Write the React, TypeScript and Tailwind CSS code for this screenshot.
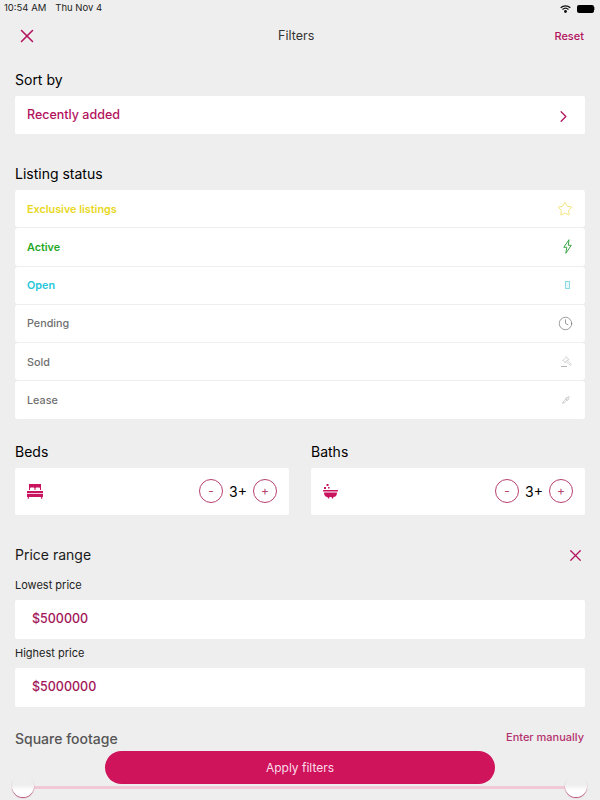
import { ChevronRight, Clock, Gavel, Pipette, Star, X } from 'lucide-react';

const ZapIcon = () => (
  <svg width="9" height="15" viewBox="0 0 9 15" fill="none" stroke="#3aa548" strokeWidth="1" strokeLinejoin="round">
    <path d="M6 .7 .8 8.300h3L2.800 14.300 8.300 6.300h-3z" />
  </svg>
);

const statuses = [
  { label: 'Exclusive listings', text: 'text-[#e8d71e] font-semibold', icon: <Star size={16} strokeWidth={1.2} className="text-[#ecdc5a]" /> },
  { label: 'Active', text: 'text-[#1fa81f] font-semibold', icon: <span className="mr-[1px]"><ZapIcon /></span> },
  {
    label: 'Open',
    text: 'text-[#25c6d9] font-semibold',
    icon: <span className="block w-[5px] h-[8px] mr-[3px] border border-[#8adbe6] bg-[#e8f8fa]" />,
  },
  { label: 'Pending', text: 'text-[#6f6f6f] font-medium', icon: <Clock size={15} strokeWidth={1} className="text-[#666666]" /> },
  {
    label: 'Sold',
    text: 'text-[#6f6f6f] font-medium',
    icon: (
      <span className="flex flex-col items-start mr-[1px]">
        <Gavel size={10} strokeWidth={1.2} className="text-[#a8a8a8] -scale-x-100 ml-[1px]" />
        <span className="block w-[6px] h-[1px] bg-[#b5b5b5]" />
      </span>
    ),
  },
  { label: 'Lease', text: 'text-[#6f6f6f] font-medium', icon: <Pipette size={8} strokeWidth={1.200} className="text-[#8a8a8a] mr-[3px]" /> },
];

const BedIcon = () => (
  <svg width="16" height="15" viewBox="0 0 16 15" fill="#c8135f">
    <path d="M2 0h12v6h-1V4.500a1 1 0 0 0-1-1H9.500a1 1 0 0 0-1 1V6h-1V4.500a1 1 0 0 0-1-1H4a1 1 0 0 0-1 1V6H2z" />
    <path d="M0 7h16v6h-.8v2h-.8l-.4-2H2l-.4 2H.8v-2H0z" />
    <rect x="0" y="9" width="16" height="1" fill="#f7c6d9" />
  </svg>
);

const BathIcon = () => (
  <svg width="15" height="15" viewBox="0 0 15 15" fill="#c8135f">
    <rect x="3.500" y="0" width="2" height="2" />
    <rect x="1" y="3" width="2" height="2" />
    <rect x="5" y="3" width="1.500" height="1.500" />
    <rect x="0" y="6" width="15" height="1.500" rx="0.500" />
    <path d="M1 8.500h13c0 3-1.500 4.500-3.500 4.500l-.5 1.500H9L8.500 13h-2L6 14.500H5L4.500 13C2.500 13 1 11.500 1 8.500z" />
  </svg>
);

const Stepper = () => (
  <div className="flex items-center">
    <span className="flex items-center justify-center w-[24px] h-[24px] rounded-full border border-[#b5416f] text-[12px] text-[#b5416f]">-</span>
    <span className="w-[30px] text-center text-[14px] text-black">3+</span>
    <span className="flex items-center justify-center w-[24px] h-[24px] rounded-full border border-[#b5416f] text-[12px] text-[#b5416f]">+</span>
  </div>
);

const SliderThumb = () => (
  <span className="block w-[22px] h-[22px] rounded-full bg-[linear-gradient(to_bottom,#eeeeee_45%,#ffffff_70%)] shadow-[0_1px_1px_#b5416f]" />
);

export default function App() {
  return (
    <div className="relative w-[600px] h-[800px] overflow-hidden bg-[#eeeeee] font-['Inter',sans-serif] text-[#1a1a1a]">
      {/* Status bar */}
      <div className="flex items-center justify-between h-[16px] pt-[1px] pl-[4px] pr-[5px] text-[9.500px] text-[#222222]">
        <div className="flex gap-[9px]">
          <span>10:54 AM</span>
          <span>Thu Nov 4</span>
        </div>
        <div className="flex items-center gap-[6px]">
          <svg width="11" height="8" viewBox="0 0 11 8" fill="none" stroke="#111111" strokeWidth="1.300">
            <path d="M.7 2.700a7 7 0 0 1 9.600 0M2.500 4.500a4.500 4.500 0 0 1 6 0" />
            <circle cx="5.500" cy="6.500" r=".8" fill="#111111" />
          </svg>
          <span className="flex items-center">
            <span className="block w-[17px] h-[8px] rounded-[2px] bg-black" />
            <span className="block w-[1px] h-[3px] bg-[#999999]" />
          </span>
        </div>
      </div>

      {/* Header */}
      <div className="flex items-center justify-between h-[40px] pl-[16px] pr-[16px]">
        <X size={22} strokeWidth={1.700} className="text-[#b3125d]" />
        <span className="text-[12.500px] text-[#333333]">Filters</span>
        <span className="text-[11px] font-medium text-[#b3125d]">Reset</span>
      </div>

      <div className="px-[15px] pt-[14px]">
        {/* Sort by */}
        <h2 className="h-[20px] text-[14px] leading-[20px] text-black">Sort by</h2>
        <div className="flex items-center justify-between h-[38px] mt-[6px] pl-[12px] pr-[12px] rounded-[2px] bg-white">
          <span className="text-[12.500px] font-medium text-[#b3125d]">Recently added</span>
          <ChevronRight size={19} strokeWidth={1.600} className="text-[#b3125d] mt-[3px]" />
        </div>

        {/* Listing status */}
        <h2 className="h-[20px] mt-[30px] text-[14px] leading-[20px] text-black">Listing status</h2>
        <div className="flex flex-col gap-[1px] mt-[6px]">
          {statuses.map((s) => (
            <div key={s.label} className="flex items-center justify-between h-[37.300px] pl-[12px] pr-[12px] rounded-[3px] bg-white">
              <span className={`pt-[2px] text-[10.800px] ${s.text}`}>{s.label}</span>
              {s.icon}
            </div>
          ))}
        </div>

        {/* Beds and baths */}
        <div className="grid grid-cols-2 gap-[22px] mt-[23px]">
          <div>
            <h2 className="h-[20px] text-[14px] leading-[20px] text-black">Beds</h2>
            <div className="flex items-center justify-between h-[47px] mt-[6px] pl-[12px] pr-[12px] rounded-[2px] bg-white">
              <BedIcon />
              <Stepper />
            </div>
          </div>
          <div>
            <h2 className="h-[20px] text-[14px] leading-[20px] text-black">Baths</h2>
            <div className="flex items-center justify-between h-[47px] mt-[6px] pl-[12px] pr-[12px] rounded-[2px] bg-white">
              <BathIcon />
              <Stepper />
            </div>
          </div>
        </div>

        {/* Price range */}
        <div className="flex items-center justify-between h-[20px] mt-[30px]">
          <h2 className="text-[14px] text-[#1a1a1a]">Price range</h2>
          <X size={19} strokeWidth={1.500} className="text-[#b3125d] mt-[2px]" />
        </div>
        <div className="h-[16px] mt-[12px] text-[11px] leading-[16px] text-[#222222]">Lowest price</div>
        <div className="flex items-center h-[39px] mt-[7px] pt-[1px] pl-[17px] rounded-[2px] bg-white text-[12.500px] font-medium text-[#a3155a]">$500000</div>
        <div className="h-[16px] mt-[6px] text-[11px] leading-[16px] text-[#222222]">Highest price</div>
        <div className="flex items-center h-[39px] mt-[7px] pt-[1px] pl-[17px] rounded-[2px] bg-white text-[12.500px] font-medium text-[#a3155a]">$5000000</div>

        {/* Square footage */}
        <div className="flex justify-between h-[20px] mt-[22px]">
          <h2 className="text-[14px] leading-[20px] font-medium text-[#555555]">Square footage</h2>
          <span className="pr-[1px] text-[11px] leading-[16px] font-medium text-[#b3326e]">Enter manually</span>
        </div>
      </div>

      {/* Slider */}
      <div className="absolute left-[12px] right-[13px] top-[775px] flex items-center justify-between h-[22px]">
        <div className="absolute left-[10px] right-[10px] top-[10.500px] h-[3px] bg-[#f0c8d6]" />
        <div className="relative"><SliderThumb /></div>
        <div className="relative"><SliderThumb /></div>
      </div>

      {/* Apply button */}
      <button className="absolute left-[105px] top-[751px] w-[390px] h-[33px] rounded-full bg-[#cf145c] text-[12px] text-[#fbdde8]">
        Apply filters
      </button>
    </div>
  );
}
